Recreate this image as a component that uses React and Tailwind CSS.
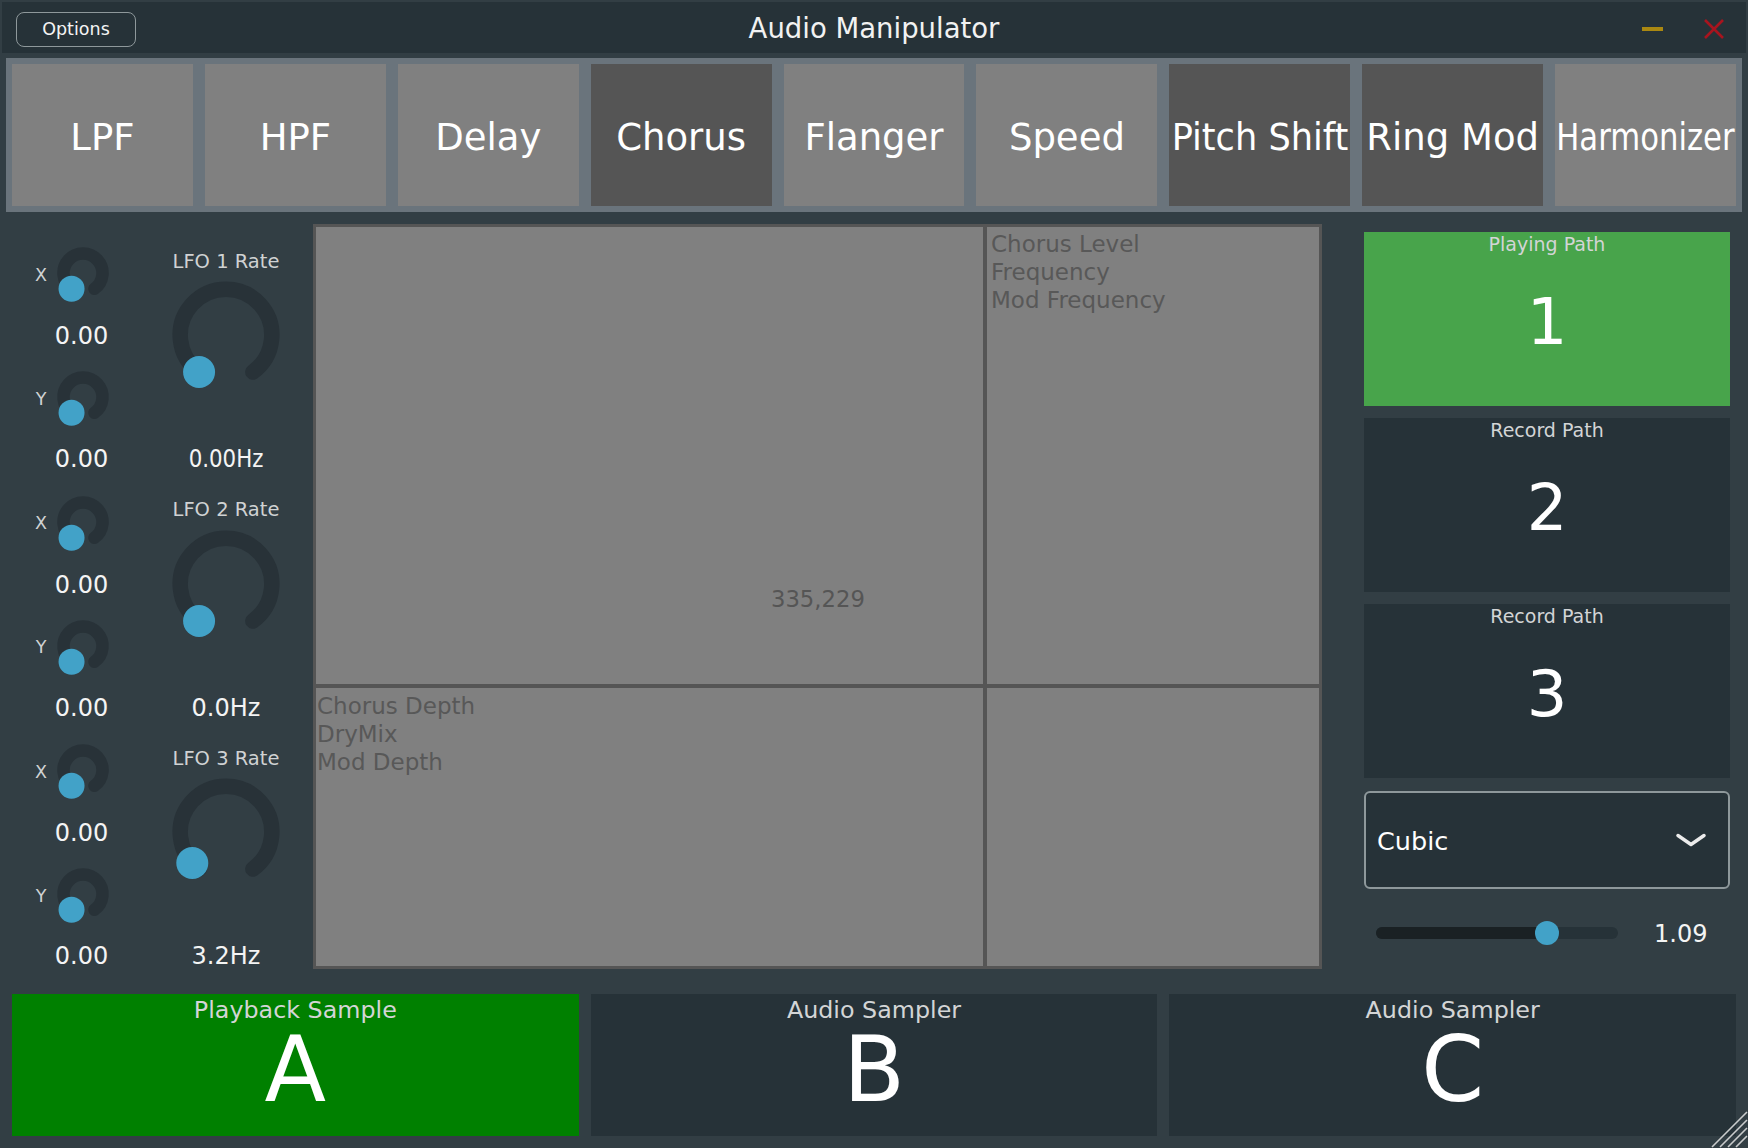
import React from "react";

// Point on a circle, angle measured clockwise from 12 o'clock (degrees)
function polar(cx, cy, r, deg) {
  const a = (deg * Math.PI) / 180;
  return [cx + r * Math.sin(a), cy - r * Math.cos(a)];
}

function Knob({ size, r, stroke, thumbR, angle = 216 }) {
  const c = size / 2;
  const [sx, sy] = polar(c, c, r, 216);
  const [ex, ey] = polar(c, c, r, 144);
  const [tx, ty] = polar(c, c, r, angle);
  return (
    <svg width={size} height={size} viewBox={`0 0 ${size} ${size}`} className="overflow-visible">
      <path
        d={`M ${sx} ${sy} A ${r} ${r} 0 1 1 ${ex} ${ey}`}
        fill="none"
        stroke="#283238"
        strokeWidth={stroke}
        strokeLinecap="round"
      />
      <circle cx={tx} cy={ty} r={thumbR} fill="#42a2c8" />
    </svg>
  );
}

function AxisRow({ axis }) {
  return (
    <div className="h-[56px] flex items-center">
      <div className="ml-[31px] mt-[5px] w-[20px] text-center text-[17.5px] leading-none text-[#d0d2d3]">{axis}</div>
      <div className="ml-[4px] w-[56px] h-[56px]">
        <Knob size={56} r={19.5} stroke={12.5} thumbR={13} />
      </div>
    </div>
  );
}

function AxisValue({ h }) {
  return (
    <div className={`${h} flex items-center`}>
      <div className="ml-[31px] mt-[2px] w-[101px] text-center text-[24px] leading-none text-[#f4f4f4]">0.00</div>
    </div>
  );
}

function LfoGroup({ label, hz, angle, squeeze }) {
  return (
    <div className="flex h-[248.5px]">
      <div className="w-[150px] flex flex-col">
        <AxisRow axis="X" />
        <AxisValue h="h-[68px]" />
        <AxisRow axis="Y" />
        <AxisValue h="h-[66px]" />
      </div>
      <div className="w-[152px] flex flex-col items-center">
        <div className="h-[33px] flex items-center text-[19.5px] leading-none text-[#d0d2d3] whitespace-nowrap">{label}</div>
        <div className="h-[114px] w-[114px]">
          <Knob size={114} r={45.8} stroke={15.5} thumbR={16} angle={angle} />
        </div>
        <div className="h-[33px]" />
        <div className="h-[66px] pt-[2px] flex items-center text-[24px] leading-none text-[#f4f4f4] whitespace-nowrap">
          <span className={squeeze ? "inline-block scale-x-[0.89]" : "inline-block"}>{hz}</span>
        </div>
      </div>
    </div>
  );
}

const tabs = [
  { name: "LPF" },
  { name: "HPF" },
  { name: "Delay" },
  { name: "Chorus", on: true },
  { name: "Flanger" },
  { name: "Speed" },
  { name: "Pitch Shift", on: true, squeeze: "scale-x-[0.95]" },
  { name: "Ring Mod", on: true },
  { name: "Harmonizer", squeeze: "scale-x-[0.83]" },
];

function PathBox({ title, num, active }) {
  return (
    <div className={`h-[174px] flex flex-col items-center ${active ? "bg-[#48a44b]" : "bg-[#263238]"}`}>
      <div className="h-[24px] flex items-center text-[19px] leading-none text-[#d3d5d6]">{title}</div>
      <div className="h-[126px] pt-[6px] flex items-center text-[64px] leading-none text-white">{num}</div>
    </div>
  );
}

function SampleBox({ title, letter, active }) {
  return (
    <div className={`flex-1 flex flex-col items-center ${active ? "bg-[#008000]" : "bg-[#263238]"}`}>
      <div className="h-[32px] pt-[1px] flex items-center text-[23.8px] leading-none text-[#d3d5d6] whitespace-nowrap">{title}</div>
      <div className="h-[86px] mt-[1px] flex items-center text-[90px] leading-none text-white">{letter}</div>
    </div>
  );
}

export default function App() {
  return (
    <div className="relative w-[1748px] h-[1148px] overflow-hidden bg-[#323e44] font-['DejaVu_Sans',sans-serif] select-none">
      {/* Title bar */}
      <div className="mx-[2px] mt-[2px] h-[51px] bg-[#263238] grid grid-cols-[1fr_auto_1fr] items-center">
        <div className="flex">
          <button className="ml-[14px] mt-[4px] w-[120px] h-[35px] rounded-[8px] border-[1.5px] border-[#8e989b] bg-[#263238] text-[17.5px] leading-none text-[#f4f4f4] flex items-center justify-center pt-[1px]">
            Options
          </button>
        </div>
        <div className="text-[27.5px] leading-none text-[#f2f2f2] mt-[3px]">Audio Manipulator</div>
        <div className="flex items-center justify-end pr-[22px] mt-[2px]">
          <div className="w-[21px] h-[4px] bg-[#aa8811]" />
          <svg width="20" height="20" viewBox="0 0 20 20" className="ml-[41px]">
            <path d="M1 1 L19 19 M19 1 L1 19" stroke="#a8141e" strokeWidth="2.6" />
          </svg>
        </div>
      </div>

      {/* Effect tabs */}
      <div className="mx-[6px] mt-[5px] h-[154px] bg-[#6a747c] p-[6px] flex gap-[12px]">
        {tabs.map((t) => (
          <div
            key={t.name}
            className={`flex-1 min-w-0 flex items-center justify-center ${t.on ? "bg-[#555555]" : "bg-[#808080]"}`}
          >
            <span className={`inline-block whitespace-nowrap text-[37px] leading-none text-white mt-[4px] ${t.squeeze || ""}`}>
              {t.name}
            </span>
          </div>
        ))}
      </div>

      {/* Main area */}
      <div className="h-[782px] flex">
        {/* LFO controls */}
        <div className="w-[313px] pt-[33px] flex flex-col">
          <LfoGroup label="LFO 1 Rate" hz="0.00Hz" angle={216} squeeze />
          <LfoGroup label="LFO 2 Rate" hz="0.0Hz" angle={216} />
          <LfoGroup label="LFO 3 Rate" hz="3.2Hz" angle={227.4} />
        </div>

        {/* XY pad grid */}
        <div className="mt-[12px] w-[1009px] h-[745px] bg-[#555555] p-[3px] grid grid-cols-[667px_1fr] grid-rows-[457px_1fr] gap-[4px]">
          <div className="relative bg-[#808080]">
            <span className="absolute left-[455px] top-[359px] text-[22.7px] leading-[27px] text-[#555555]">335,229</span>
          </div>
          <div className="bg-[#808080] pt-[3px] pl-[4px] text-[23px] leading-[28px] text-[#585858]">
            <div>Chorus Level</div>
            <div>Frequency</div>
            <div>Mod Frequency</div>
          </div>
          <div className="bg-[#808080] pt-[4px] pl-[1px] text-[23px] leading-[28px] text-[#585858]">
            <div>Chorus Depth</div>
            <div>DryMix</div>
            <div>Mod Depth</div>
          </div>
          <div className="bg-[#808080]" />
        </div>

        {/* Path selection */}
        <div className="w-[426px] pl-[42px] pr-[18px] pt-[20px] flex flex-col">
          <div className="flex flex-col gap-[12px]">
            <PathBox title="Playing Path" num="1" active />
            <PathBox title="Record Path" num="2" />
            <PathBox title="Record Path" num="3" />
          </div>
          <div className="mt-[13px] h-[98px] rounded-[6px] border-2 border-[#8e989b] bg-[#263238] flex items-center pl-[11px] pr-[22px]">
            <span className="flex-1 mt-[3px] text-[25.5px] leading-none text-white">Cubic</span>
            <svg width="30" height="14" viewBox="0 0 30 14">
              <polyline points="2,2.5 15,11.5 28,2.5" fill="none" stroke="#ececec" strokeWidth="3.4" strokeLinecap="round" strokeLinejoin="round" />
            </svg>
          </div>
          <div className="mt-[32px] h-[24px] flex items-center pl-[12px]">
            <div className="relative w-[242px] h-[12px] rounded-full bg-[#263238]">
              <div className="w-[171px] h-full rounded-l-full bg-[#1a2124]" />
              <div className="absolute left-[159px] top-[-6px] w-[24px] h-[24px] rounded-full bg-[#42a2c8]" />
            </div>
            <span className="ml-[36px] mt-[2px] text-[24px] leading-none text-[#f4f4f4]">1.09</span>
          </div>
        </div>
      </div>

      {/* Sample slots */}
      <div className="h-[142px] px-[12px] flex gap-[12px]">
        <SampleBox title="Playback Sample" letter="A" active />
        <SampleBox title="Audio Sampler" letter="B" />
        <SampleBox title="Audio Sampler" letter="C" />
      </div>

      {/* Window resize grip */}
      <svg width="37" height="37" viewBox="0 0 37 37" className="absolute right-0 bottom-0">
        <path d="M36 1 L1 36 M36 9 L9 36 M36 17 L17 36 M36 25 L25 36" stroke="#c9cbcc" strokeWidth="1.6" />
      </svg>
    </div>
  );
}
